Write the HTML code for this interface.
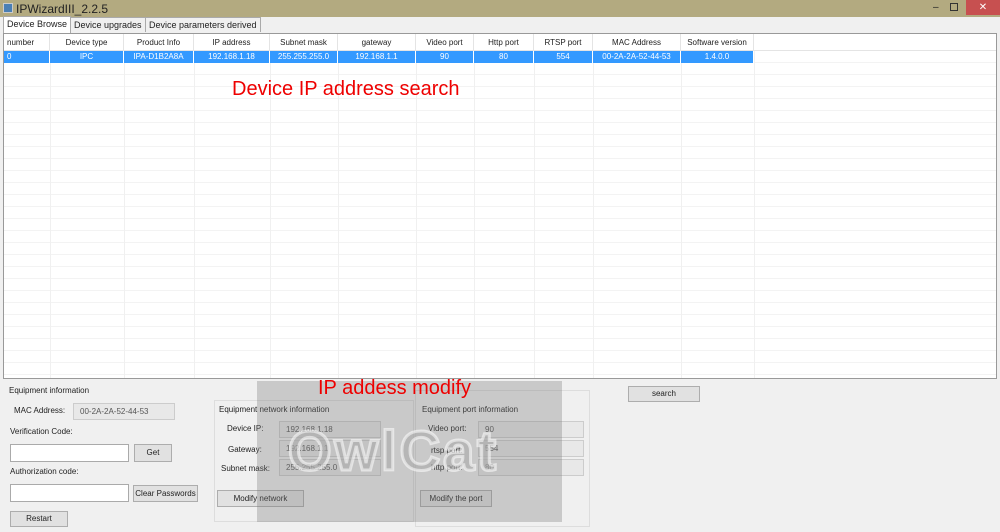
<!DOCTYPE html><html><head><style>
*{margin:0;padding:0;box-sizing:border-box}
body{width:1000px;height:532px;overflow:hidden;background:#f0f0f0;font-family:"Liberation Sans",sans-serif;font-size:8px;color:#222;position:relative}
.a{position:absolute}
.tb{left:0;top:0;width:1000px;height:17px;background:#b3aa80}
.tab{top:17px;height:15px;border:1px solid #aaa;border-bottom:none;font-size:9px;padding:2px 3px;background:#f0f0f0}
.grid{left:3px;top:33px;width:994px;height:346px;background:#fff;border:1px solid #999;overflow:hidden}
.h{top:0;height:17px;text-align:center;line-height:17px;font-size:8px}
.r{top:17px;height:12px;text-align:center;line-height:12px;background:#3399ff;color:#fff;border-right:1px solid #fff;font-size:8px}
.v{top:0;width:1px;height:344px;background:#f0f0f0}
.btn{background:#e1e1e1;border:1px solid #adadad;text-align:center;font-size:8px}
.inp{background:#fff;border:1px solid #aaa}
.ro{background:#e8e8e8;border:1px solid #ccc;font-size:8px;padding-left:6px;color:#555}
.lb{font-size:8px}
</style></head><body>
<div class="a tb"></div>
<div class="a" style="left:3px;top:3px;width:10px;height:10px;background:#4a7fb5;border:1px solid #ccc"></div>
<div class="a" style="left:16px;top:2px;font-size:12px">IPWizardIII_2.2.5</div>
<div class="a" style="left:933px;top:2px;font-size:10px">–</div>
<div class="a" style="left:950px;top:3px;width:8px;height:8px;border:1px solid #333"></div>
<div class="a" style="left:966px;top:0;width:34px;height:15px;background:#c75050;color:#fff;text-align:center;font-size:10px;line-height:15px">✕</div>
<div class="a tab" style="left:3px;top:16px;height:17px;background:#fff">Device Browse</div>
<div class="a tab" style="left:70px">Device upgrades</div>
<div class="a tab" style="left:145px">Device parameters derived</div>
<div class="a grid">
<div class="a" style="left:0;top:0;width:992px;height:344px;background:repeating-linear-gradient(#fff 0 11px,#f3f3f3 11px 12px);background-position:0 5px"></div>
<div class="a v" style="left:46px"></div><div class="a v" style="left:120px"></div><div class="a v" style="left:190px"></div><div class="a v" style="left:266px"></div><div class="a v" style="left:334px"></div><div class="a v" style="left:412px"></div><div class="a v" style="left:470px"></div><div class="a v" style="left:530px"></div><div class="a v" style="left:589px"></div><div class="a v" style="left:677px"></div><div class="a v" style="left:750px"></div>
<div class="a" style="left:0;top:0;width:992px;height:17px;background:#fff;border-bottom:1px solid #e4e4e4"></div>
<div class="a h" style="left:0;width:46px;text-align:left;padding-left:3px;border-right:1px solid #e4e4e4">number</div>
<div class="a h" style="left:46px;width:74px;border-right:1px solid #e4e4e4">Device type</div>
<div class="a h" style="left:120px;width:70px;border-right:1px solid #e4e4e4">Product Info</div>
<div class="a h" style="left:190px;width:76px;border-right:1px solid #e4e4e4">IP address</div>
<div class="a h" style="left:266px;width:68px;border-right:1px solid #e4e4e4">Subnet mask</div>
<div class="a h" style="left:334px;width:78px;border-right:1px solid #e4e4e4">gateway</div>
<div class="a h" style="left:412px;width:58px;border-right:1px solid #e4e4e4">Video port</div>
<div class="a h" style="left:470px;width:60px;border-right:1px solid #e4e4e4">Http port</div>
<div class="a h" style="left:530px;width:59px;border-right:1px solid #e4e4e4">RTSP port</div>
<div class="a h" style="left:589px;width:88px;border-right:1px solid #e4e4e4">MAC Address</div>
<div class="a h" style="left:677px;width:73px;border-right:1px solid #e4e4e4">Software version</div>
<div class="a r" style="left:0;width:46px;text-align:left;padding-left:3px">0</div>
<div class="a r" style="left:46px;width:74px">IPC</div>
<div class="a r" style="left:120px;width:70px">IPA-D1B2A8A</div>
<div class="a r" style="left:190px;width:76px">192.168.1.18</div>
<div class="a r" style="left:266px;width:68px">255.255.255.0</div>
<div class="a r" style="left:334px;width:78px">192.168.1.1</div>
<div class="a r" style="left:412px;width:58px">90</div>
<div class="a r" style="left:470px;width:60px">80</div>
<div class="a r" style="left:530px;width:59px">554</div>
<div class="a r" style="left:589px;width:88px">00-2A-2A-52-44-53</div>
<div class="a r" style="left:677px;width:73px">1.4.0.0</div>
<div class="a" style="left:228px;top:44px;font-size:20px;color:#e00">Device IP address search</div>
</div>
<div class="a lb" style="left:9px;top:386px">Equipment information</div>
<div class="a lb" style="left:14px;top:406px">MAC Address:</div>
<div class="a ro" style="left:73px;top:403px;width:102px;height:17px;line-height:15px">00-2A-2A-52-44-53</div>
<div class="a lb" style="left:10px;top:427px">Verification Code:</div>
<div class="a inp" style="left:10px;top:444px;width:119px;height:18px"></div>
<div class="a btn" style="left:134px;top:444px;width:38px;height:18px;line-height:16px">Get</div>
<div class="a lb" style="left:10px;top:467px">Authorization code:</div>
<div class="a inp" style="left:10px;top:484px;width:119px;height:18px"></div>
<div class="a btn" style="left:133px;top:485px;width:65px;height:17px;line-height:15px">Clear Passwords</div>
<div class="a btn" style="left:10px;top:511px;width:58px;height:16px;line-height:14px">Restart</div>
<div class="a" style="left:214px;top:400px;width:200px;height:122px;border:1px solid #ddd"></div>
<div class="a lb" style="left:219px;top:405px">Equipment network information</div>
<div class="a lb" style="left:227px;top:424px">Device IP:</div>
<div class="a ro" style="left:279px;top:421px;width:102px;height:17px;line-height:15px">192.168.1.18</div>
<div class="a lb" style="left:228px;top:445px">Gateway:</div>
<div class="a ro" style="left:279px;top:440px;width:102px;height:17px;line-height:15px">192.168.1.1</div>
<div class="a lb" style="left:221px;top:464px">Subnet mask:</div>
<div class="a ro" style="left:279px;top:459px;width:102px;height:17px;line-height:15px">255.255.255.0</div>
<div class="a btn" style="left:217px;top:490px;width:87px;height:17px;line-height:15px">Modify network</div>
<div class="a" style="left:415px;top:390px;width:175px;height:137px;border:1px solid #ddd"></div>
<div class="a lb" style="left:422px;top:405px">Equipment port information</div>
<div class="a lb" style="left:428px;top:424px">Video port:</div>
<div class="a ro" style="left:478px;top:421px;width:106px;height:17px;line-height:15px">90</div>
<div class="a lb" style="left:431px;top:446px">rtsp port:</div>
<div class="a ro" style="left:478px;top:440px;width:106px;height:17px;line-height:15px">554</div>
<div class="a lb" style="left:431px;top:463px">http port:</div>
<div class="a ro" style="left:478px;top:459px;width:106px;height:17px;line-height:15px">80</div>
<div class="a btn" style="left:420px;top:490px;width:72px;height:17px;line-height:15px">Modify the port</div>
<div class="a btn" style="left:628px;top:386px;width:72px;height:16px;line-height:14px">search</div>
<div class="a" style="left:257px;top:381px;width:305px;height:141px;background:rgba(120,120,120,0.33)"></div>
<div class="a" style="left:288px;top:418px;font-size:56px;font-weight:bold;color:rgba(170,170,170,0.6);-webkit-text-stroke:3px rgba(255,255,255,0.55);letter-spacing:3px">OwlCat</div>
<div class="a" style="left:318px;top:377px;font-size:20px;color:#e00">IP addess modify</div>
</body></html>
